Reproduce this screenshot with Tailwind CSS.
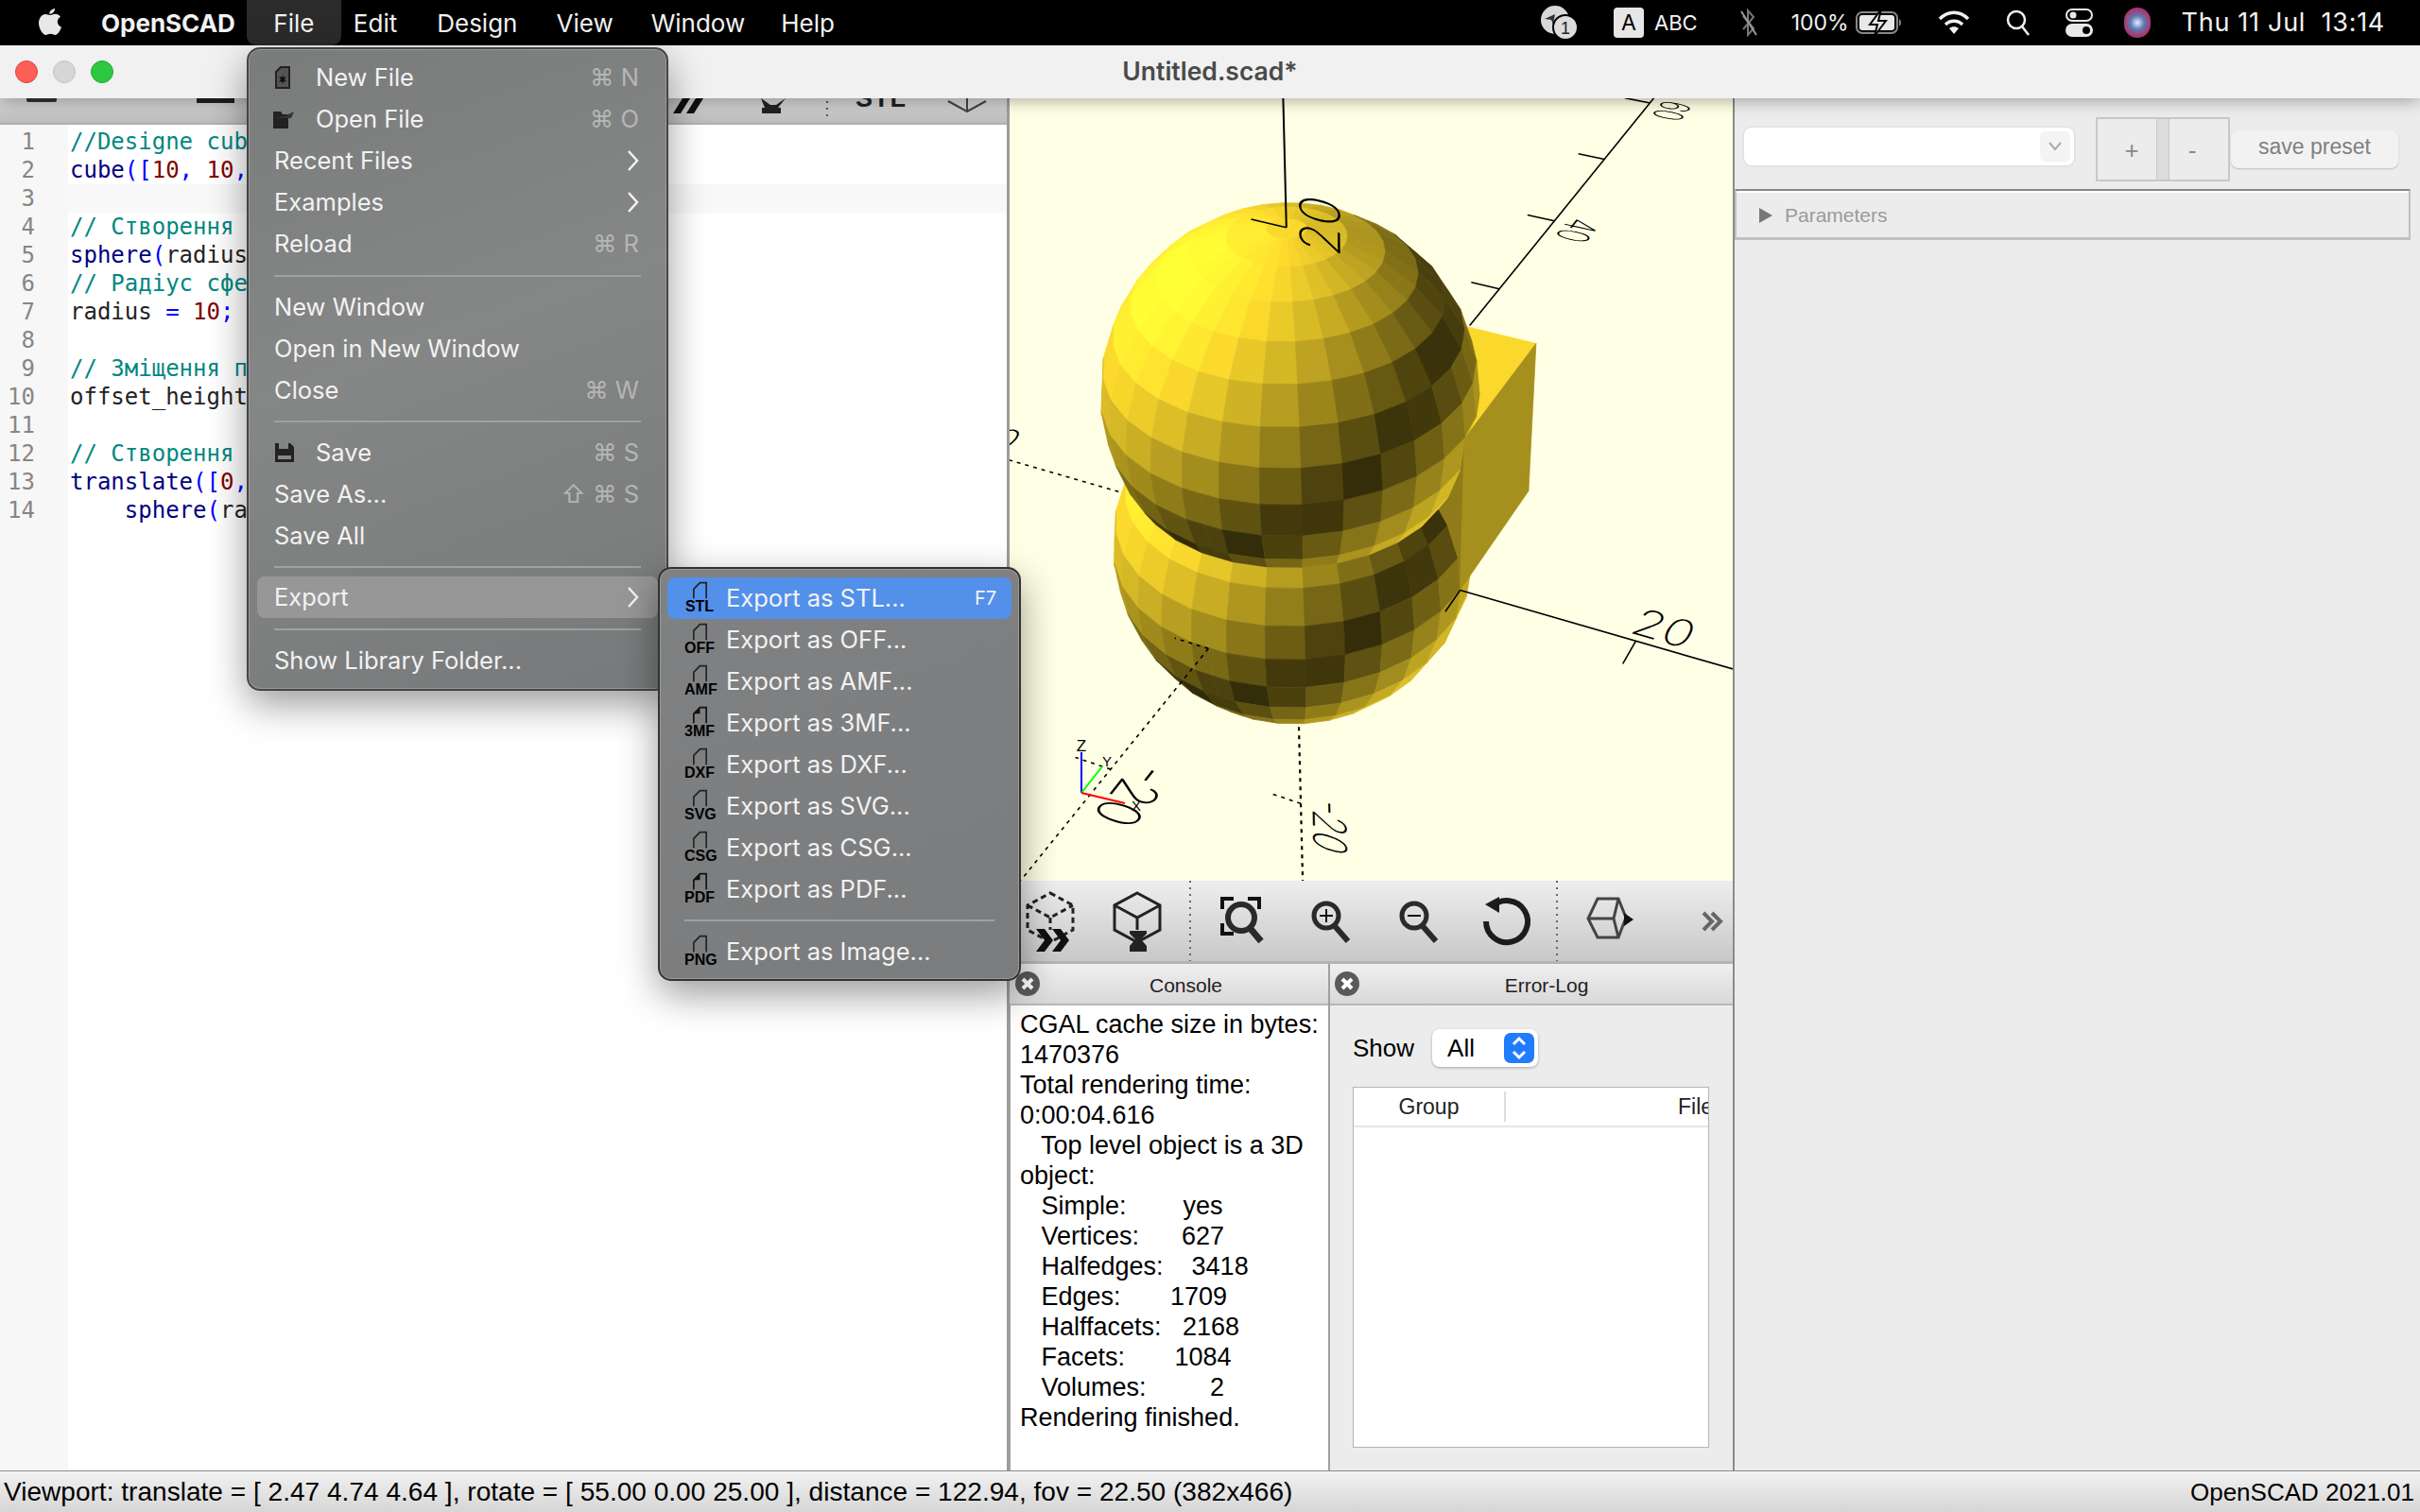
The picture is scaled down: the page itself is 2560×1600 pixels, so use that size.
<!DOCTYPE html>
<html lang="en">
<head>
    <meta charset="UTF-8">
    <title>OpenSCAD</title>
    <script src="https://cdn.jsdelivr.net/npm/@tailwindcss/browser@4"></script>
</head>
<body class="bg-[#ececec] overflow-hidden">
<div class="relative w-[2560px] h-[1600px] flex flex-col overflow-hidden font-['Liberation_Sans',sans-serif] text-black">

    <!-- mac menu bar -->
    <div class="h-[48px] bg-black text-[#f2f2f2] flex items-center text-[26px] font-['Inter',sans-serif] relative z-30 shrink-0">
        <svg class="ml-[40px] w-[26px] h-[32px]" viewBox="0 0 26 32"><path fill="#e8e8e8" d="M18 1c.3 3-2.600 6-5.600 5.800C12 4 15 1.300 18 1zM13 8c1.500 0 3-1.300 5.500-1.300 2 0 4.200 1 5.500 3-4.700 2.700-4 9 1 11-1.200 3.400-4 8.300-6.700 8.300-1.800 0-2.700-1.200-4.800-1.200s-3.200 1.200-4.800 1.200C5 29 1 22 1 16.500 1 11 4.500 7 8 7c2 0 3.600 1 5 1z"/></svg>
        <span class="ml-[41px] font-bold">OpenSCAD</span>
        <span class="ml-[12px] w-[100px] h-[48px] bg-[#2b2b2b] rounded-b-[10px] flex items-center justify-center">File</span>
        <span class="ml-[13px]">Edit</span>
        <span class="ml-[42px]">Design</span>
        <span class="ml-[41px]">View</span>
        <span class="ml-[40px]">Window</span>
        <span class="ml-[38px]">Help</span>
        <div class="ml-auto flex items-center h-[48px]">
            <svg class="w-[40px] h-[36px]" viewBox="0 0 40 36"><circle cx="16" cy="15" r="15" fill="#d8d8d8"/><path d="M5 14l11-5-2 11-2-5z" fill="#333"/><circle cx="27" cy="23" r="13" fill="#dcdcdc" stroke="#000" stroke-width="2"/><text x="27" y="30" text-anchor="middle" font-size="18" font-family="Liberation Sans" fill="#222">1</text></svg>
            <span class="ml-[38px] w-[32px] h-[32px] rounded-[4px] bg-[#e6e6e6] text-black text-[23px] flex items-center justify-center">A</span>
            <span class="ml-[11px] text-[22px]">ABC</span>
            <svg class="ml-[44px] w-[20px] h-[30px]" viewBox="0 0 20 30"><path d="M4 8l11 13-6 7V2l6 7L4 22" fill="none" stroke="#777" stroke-width="2"/><path d="M2 3l16 25" stroke="#999" stroke-width="2"/></svg>
            <span class="ml-[35px] text-[23px]">100%</span>
            <svg class="ml-[7px] w-[50px] h-[30px]" viewBox="0 0 50 30"><rect x="1" y="4" width="43" height="22" rx="6" fill="none" stroke="#888" stroke-width="2"/><rect x="4" y="7" width="37" height="16" rx="3" fill="#e8e8e8"/><path d="M46 11v8a4 4 0 0 0 2-4 4 4 0 0 0-2-4z" fill="#888"/><path d="M27 1L15 17h8l-3 12 12-16h-8z" fill="#e8e8e8" stroke="#000" stroke-width="2"/></svg>
            <svg class="ml-[37px] w-[34px] h-[26px]" viewBox="0 0 34 26"><path d="M2 9c9-9 21-9 30 0M8 15c5-5 13-5 18 0" fill="none" stroke="#f0f0f0" stroke-width="3.500"/><path d="M12 19c3-2.500 7-2.500 10 0l-5 6z" fill="#f0f0f0"/></svg>
            <svg class="ml-[38px] w-[26px] h-[28px]" viewBox="0 0 26 28"><circle cx="11" cy="11" r="9" fill="none" stroke="#f0f0f0" stroke-width="2.500"/><path d="M17 18l7 9" stroke="#f0f0f0" stroke-width="2.500"/></svg>
            <svg class="ml-[37px] w-[29px] h-[30px]" viewBox="0 0 29 30"><rect x="1" y="1" width="27" height="12" rx="6" fill="none" stroke="#e8e8e8" stroke-width="2"/><circle cx="8" cy="7" r="3.500" fill="#e8e8e8"/><rect x="0" y="16" width="29" height="14" rx="7" fill="#e8e8e8"/><circle cx="22" cy="23" r="4" fill="#000"/></svg>
            <div class="ml-[33px] w-[28px] h-[32px] rounded-full bg-[radial-gradient(circle,#dff0ff_0%,#5f78b0_35%,#b0306a_70%,#2f7f8a_100%)]"></div>
            <span class="ml-[33px] mr-[37px] tracking-[0.7px] whitespace-pre text-[27px]">Thu 11 Jul  13:14</span>
        </div>
    </div>

    <!-- window title -->
    <div class="h-[56px] bg-[#f0f1f0] flex items-center relative z-20 shrink-0 shadow-[0_2px_18px_rgba(0,0,0,0.35)]">
        <div class="flex gap-[16px] pl-[16px]">
            <span class="w-[24px] h-[24px] rounded-full bg-[#fb5f57] border border-[#e0443e]"></span>
            <span class="w-[24px] h-[24px] rounded-full bg-[#d5d6d5] border border-[#c0c1c0]"></span>
            <span class="w-[24px] h-[24px] rounded-full bg-[#2ec840] border border-[#1fae2c]"></span>
        </div>
        <span class="absolute left-0 right-0 text-center text-[26.500px] font-semibold text-[#4a4a4a] font-['Inter',sans-serif]">Untitled.scad*</span>
    </div>

    <!-- main area -->
    <div class="flex-1 flex min-h-0">

        <!-- editor column -->
        <div class="w-[1068px] flex flex-col border-r-[3px] border-[#9c9c9c] shrink-0">
            <svg class="h-[28px] w-full shrink-0 bg-[linear-gradient(#d8d8d8,#bcbcbc)] border-b-[2px] border-[#b0b0b0]" viewBox="0 104 1065 26">
                <path d="M28 104h32v2a2 2 0 0 1-2 2H30a2 2 0 0 1-2-2z" fill="#333"/>
                <rect x="208" y="104" width="40" height="5" fill="#222"/>
                <path d="M712 120l10-16h8l-10 16zM726 120l10-16h8l-10 16z" fill="#111"/>
                <path d="M805 104l10 7h6l10-7-8 10h3v6h-20v-6h3z" fill="#222"/>
                <path d="M875 107v21" stroke="#555" stroke-width="2" stroke-dasharray="2 5"/>
                <text x="905" y="113" font-size="27" font-weight="700" font-family="Liberation Sans" fill="#222" letter-spacing="1">STL</text>
                <path d="M1003 107l20 11 20-11M1023 104v14" fill="none" stroke="#444" stroke-width="2"/>
            </svg>
            <div class="flex-1 flex bg-white overflow-hidden font-['DejaVu_Sans_Mono',monospace] text-[24px] leading-[30px]">
                <div class="w-[72px] shrink-0 bg-[#f7f7f7] text-[#868686] text-right pr-[35px] pt-[3px]">
                    <div>1</div><div>2</div><div>3</div><div>4</div><div>5</div><div>6</div><div>7</div><div>8</div><div>9</div><div>10</div><div>11</div><div>12</div><div>13</div><div>14</div>
                </div>
                <div class="flex-1 pt-[3px] pl-[2px] text-[#222] [&>div]:whitespace-pre">
                    <div class="text-[#00877f]">//Designe cub</div>
                    <div><span class="text-[#000080]">cube</span><span class="text-[#0000ff]">([</span><span class="text-[#800000]">10</span><span class="text-[#0000ff]">,</span> <span class="text-[#800000]">10</span><span class="text-[#0000ff]">,</span></div>
                    <div class="h-[30px] bg-[#f8f8f8] -ml-[2px]"></div>
                    <div class="text-[#00877f]">// Створення</div>
                    <div><span class="text-[#000080]">sphere</span><span class="text-[#0000ff]">(</span>radius</div>
                    <div class="text-[#00877f]">// Радіус сфе</div>
                    <div>radius <span class="text-[#0000ff]">=</span> <span class="text-[#800000]">10</span><span class="text-[#0000ff]">;</span></div>
                    <div class="h-[30px]"></div>
                    <div class="text-[#00877f]">// Зміщення п</div>
                    <div>offset_height</div>
                    <div class="h-[30px]"></div>
                    <div class="text-[#00877f]">// Створення</div>
                    <div><span class="text-[#000080]">translate</span><span class="text-[#0000ff]">([</span><span class="text-[#800000]">0</span><span class="text-[#0000ff]">,</span></div>
                    <div>    <span class="text-[#000080]">sphere</span><span class="text-[#0000ff]">(</span>ra</div>
                </div>
            </div>
        </div>

        <!-- 3d view, toolbar and docks -->
        <div class="w-[767px] flex flex-col border-r-[2px] border-[#8a8a8a] shrink-0">
            <svg id="view" class="w-[765px] h-[828px] shrink-0 bg-[#ffffe5]" viewBox="1070 104 765 828"></svg>
            <svg class="w-[765px] h-[88px] shrink-0 bg-[linear-gradient(#eeeeee,#c8c8c8)] border-b-[3px] border-[#b4b4b4]" viewBox="1070 932 765 85">
                <g fill="none" stroke="#222" stroke-width="3">
                    <path d="M1113 945l24 13v26l-24 13-24-13v-26zM1089 958l24 13 24-13M1113 971v13" stroke-dasharray="6 4"/>
                    <path d="M1205 945l24 13v26l-24 13-24-13v-26zM1181 958l24 13 24-13M1205 971v13"/>
                    <path d="M1295 962v-11h12M1322 951h12v11M1295 977v11h12M1334 978" stroke-width="4" stroke="#111"/>
                    <circle cx="1315" cy="971" r="14" stroke-width="6" stroke="#2a2a2a"/>
                    <path d="M1325 983l11 13" stroke-width="7" stroke="#2a2a2a"/>
                    <circle cx="1405" cy="969" r="13" stroke-width="5" stroke="#2a2a2a"/>
                    <path d="M1414 980l14 16" stroke-width="6" stroke="#2a2a2a"/>
                    <path d="M1398 969h14M1405 962v14" stroke-width="2" stroke="#111"/>
                    <circle cx="1498" cy="969" r="13" stroke-width="5" stroke="#2a2a2a"/>
                    <path d="M1507 980l14 16" stroke-width="6" stroke="#2a2a2a"/>
                    <path d="M1491 969h14" stroke-width="2" stroke="#111"/>
                    <path d="M1580 960a22 22 0 1 1-6 15" stroke-width="6" stroke="#1c1c1c"/>
                    <path d="M1692 951h22l8 20-8 21h-22l-10-20zM1682 972h27l5-21M1709 972l5 20" stroke="#444"/>
                </g>
                <path d="M1197 985h18v3l-6 6 6 7v6h-18v-6l6-7-6-6z" fill="#222"/>
                <path d="M1098 983h9l9 12-9 12h-9l9-12zM1115 983h9l9 12-9 12h-9l9-12z" fill="#111"/>
                <path d="M1573 957l15-8v17z" fill="#1c1c1c"/>
                <path d="M1720 966l10 7-10 7z" fill="#111"/>
                <path d="M1804 966l9 9-9 9M1813 966l9 9-9 9" fill="none" stroke="#666" stroke-width="4"/>
                <path d="M1261 932v85M1649 932v85" stroke="#666" stroke-width="2" stroke-dasharray="2 5"/>
            </svg>

            <div class="flex-1 flex min-h-0 bg-[#ececec]">
                <div class="w-[339px] flex flex-col border-r-[2px] border-[#a0a0a0] shrink-0">
                    <div class="relative h-[44px] shrink-0 bg-[linear-gradient(#f0f0f0,#d8d8d8)] border-b-[2px] border-[#b8b8b8] flex items-center justify-center text-[21px] text-[#222] pt-[3px]">
                        <svg class="absolute left-[6px] top-[8px] w-[26px] h-[26px]" viewBox="0 0 26 26"><circle cx="13" cy="13" r="13" fill="#5a5a5a"/><path d="M8 8l10 10M18 8L8 18" stroke="#fff" stroke-width="4"/></svg>
                        <span class="pl-[36px]">Console</span>
                    </div>
                    <div class="flex-1 bg-white border-l-[1px] border-[#a0a0a0] pl-[10px] pt-[4px] text-[27px] leading-[32px] [&>div]:whitespace-pre">
                        <div>CGAL cache size in bytes:</div>
                        <div>1470376</div>
                        <div>Total rendering time:</div>
                        <div>0:00:04.616</div>
                        <div>   Top level object is a 3D</div>
                        <div>object:</div>
                        <div>   Simple:        yes</div>
                        <div>   Vertices:      627</div>
                        <div>   Halfedges:    3418</div>
                        <div>   Edges:       1709</div>
                        <div>   Halffacets:   2168</div>
                        <div>   Facets:       1084</div>
                        <div>   Volumes:         2</div>
                        <div>Rendering finished.</div>
                    </div>
                </div>
                <div class="flex-1 min-w-0 flex flex-col">
                    <div class="relative h-[44px] shrink-0 bg-[linear-gradient(#f0f0f0,#d8d8d8)] border-b-[2px] border-[#b8b8b8] flex items-center justify-center text-[21px] text-[#222] pt-[3px]">
                        <svg class="absolute left-[5px] top-[8px] w-[26px] h-[26px]" viewBox="0 0 26 26"><circle cx="13" cy="13" r="13" fill="#5a5a5a"/><path d="M8 8l10 10M18 8L8 18" stroke="#fff" stroke-width="4"/></svg>
                        <span class="pl-[32px]">Error-Log</span>
                    </div>
                    <div class="flex-1 min-w-0 pl-[24px] pr-[25px] pb-[24px] flex flex-col">
                        <div class="h-[86px] shrink-0 flex items-center text-[26px] pt-[4px]">
                            <span>Show</span>
                            <div class="ml-[19px] w-[112px] h-[40px] bg-white rounded-[8px] shadow-[0_1px_3px_rgba(0,0,0,0.3)] flex items-center pl-[16px] pr-[4px] justify-between">
                                <span>All</span>
                                <svg class="w-[32px] h-[32px]" viewBox="0 0 32 32"><rect width="32" height="32" rx="7" fill="#1f7cff"/><path d="M10 12l6-6 6 6M10 20l6 6 6-6" fill="none" stroke="#fff" stroke-width="3"/></svg>
                            </div>
                        </div>
                        <div class="flex-1 min-w-0 bg-white border-[1px] border-[#b4b4b4] flex flex-col overflow-hidden">
                            <div class="h-[42px] shrink-0 border-b-[2px] border-[#e6e6e6] flex items-center text-[23px] text-[#222] whitespace-nowrap">
                                <span class="w-[161px] h-[32px] shrink-0 border-r-[2px] border-[#dddddd] flex items-center justify-center">Group</span>
                                <span class="ml-[182px]">File</span>
                            </div>
                        </div>
                    </div>
                </div>
            </div>
        </div>

        <!-- customizer -->
        <div class="flex-1 min-w-0 bg-[#ececec] pr-[10px]">
            <div class="h-[96px] flex items-start">
                <div class="ml-[10px] mt-[31px] w-[349px] h-[40px] bg-white rounded-[8px] shadow-[0_0_3px_rgba(0,0,0,0.15)] flex justify-end items-center pr-[4px]">
                    <span class="w-[32px] h-[32px] bg-[#f4f4f4] rounded-[6px] flex items-center justify-center">
                        <svg class="w-[14px] h-[10px]" viewBox="0 0 14 10"><path d="M1 1l6 7 6-7" fill="none" stroke="#aaa" stroke-width="2"/></svg>
                    </span>
                </div>
                <div class="ml-[23px] mt-[20px] w-[142px] h-[68px] border-[2px] border-[#c8c8c8] flex text-[26px] text-[#888]">
                    <span class="w-[62px] flex items-center justify-center pt-[3px] pl-[10px]">+</span>
                    <span class="w-[14px] bg-[#dcdcdc] border-x-[1px] border-[#c8c8c8]"></span>
                    <span class="flex-1 flex items-center justify-center pt-[3px] pr-[14px]">-</span>
                </div>
                <div class="ml-[1px] mt-[34px] w-[177px] h-[40px] bg-[#f2f2f2] rounded-[8px] shadow-[0_1px_2px_rgba(0,0,0,0.2)] flex items-center justify-center text-[23px] text-[#808080] pb-[6px]">save preset</div>
            </div>
            <div class="h-[54px] border-t-[2px] border-x-[2px] border-t-[#888] border-x-[#c0c0c0] border-b-[3px] border-b-[#c0c0c0] shadow-[inset_0_2px_0_#fff] flex items-center pl-[23px] text-[21px] text-[#9a9a9a] pt-[3px]">
                <svg class="w-[16px] h-[18px] mr-[12px]" viewBox="0 0 16 18"><path d="M1 1l14 8-14 8z" fill="#777"/></svg>
                Parameters
            </div>
        </div>
    </div>

    <!-- status bar -->
    <div class="h-[44px] shrink-0 border-t-[1px] border-[#8a8a8a] bg-[linear-gradient(#f2f2f2,#d6d6d6)] flex items-center justify-between pl-[4px] pr-[6px] pt-[1px] whitespace-pre">
        <span class="text-[28px] tracking-[0.03px]">Viewport: translate = [ 2.47 4.74 4.64 ], rotate = [ 55.00 0.00 25.00 ], distance = 122.94, fov = 22.50 (382x466)</span>
        <span class="text-[26px]">OpenSCAD 2021.01</span>
    </div>

    <!-- file menu -->
    <div class="absolute z-40 left-[261px] top-[50px] w-[446px] h-[681px] pt-[8px] rounded-[14px] border-[2px] border-[#444444] bg-[linear-gradient(160deg,#7a7b7b,#858686_45%,#77797a)] shadow-[0_14px_40px_rgba(0,0,0,0.4),inset_0_0_0_1px_#9a9a9a] text-[#f2f2f2] text-[25.500px] font-['Inter','DejaVu_Sans',sans-serif]">
        <div class="h-[44px] mx-[9px] px-[18px] flex items-center"><svg class="w-[18px] h-[24px] mr-[26px]" viewBox="0 0 18 24"><path d="M2 6l5-5h9v22H2z" fill="#555" stroke="#222" stroke-width="2"/><path d="M9 9l1 3 3-1-2 3 2 3-3-1-1 3-1-3-3 1 2-3-2-3 3 1z" fill="#111"/></svg>New File<span class="ml-auto pr-[2px] text-[#b4b6b6]">⌘ N</span></div>
        <div class="h-[44px] mx-[9px] px-[18px] flex items-center"><svg class="w-[24px] h-[24px] -ml-[2px] mr-[22px]" viewBox="0 0 24 24"><path d="M1 4h8l2 3h6v15H1z" fill="#222"/><path d="M13 9l10-5-3 7H1" fill="#333"/></svg>Open File<span class="ml-auto pr-[2px] text-[#b4b6b6]">⌘ O</span></div>
        <div class="h-[44px] mx-[9px] px-[18px] flex items-center">Recent Files<svg class="ml-auto mr-[2px] w-[12px] h-[22px]" viewBox="0 0 12 22"><path d="M1 1l9 10-9 10" fill="none" stroke="#f2f2f2" stroke-width="2.500"/></svg></div>
        <div class="h-[44px] mx-[9px] px-[18px] flex items-center">Examples<svg class="ml-auto mr-[2px] w-[12px] h-[22px]" viewBox="0 0 12 22"><path d="M1 1l9 10-9 10" fill="none" stroke="#f2f2f2" stroke-width="2.500"/></svg></div>
        <div class="h-[44px] mx-[9px] px-[18px] flex items-center">Reload<span class="ml-auto pr-[2px] text-[#b4b6b6]">⌘ R</span></div>
        <div class="h-[23px] mx-[27px] flex items-center"><div class="h-[2px] w-full bg-[#9fa0a0]"></div></div>
        <div class="h-[44px] mx-[9px] px-[18px] flex items-center">New Window</div>
        <div class="h-[44px] mx-[9px] px-[18px] flex items-center">Open in New Window</div>
        <div class="h-[44px] mx-[9px] px-[18px] flex items-center">Close<span class="ml-auto pr-[2px] text-[#b4b6b6]">⌘ W</span></div>
        <div class="h-[22px] mx-[27px] flex items-center"><div class="h-[2px] w-full bg-[#9fa0a0]"></div></div>
        <div class="h-[44px] mx-[9px] px-[18px] flex items-center"><svg class="w-[22px] h-[22px] mr-[22px]" viewBox="0 0 22 22"><path d="M1 1h4v6h10V1h2l4 4v16H1z" fill="#222"/><rect x="4" y="14" width="14" height="4" fill="#888"/></svg>Save<span class="ml-auto pr-[2px] text-[#b4b6b6]">⌘ S</span></div>
        <div class="h-[44px] mx-[9px] px-[18px] flex items-center">Save As...<span class="ml-auto pr-[2px] text-[#b4b6b6]">⇧ ⌘ S</span></div>
        <div class="h-[44px] mx-[9px] px-[18px] flex items-center">Save All</div>
        <div class="h-[21px] mx-[27px] flex items-center"><div class="h-[2px] w-full bg-[#9fa0a0]"></div></div>
        <div class="h-[44px] mx-[9px] px-[18px] flex items-center rounded-[8px] bg-[#979797]">Export<svg class="ml-auto mr-[2px] w-[12px] h-[22px]" viewBox="0 0 12 22"><path d="M1 1l9 10-9 10" fill="none" stroke="#f2f2f2" stroke-width="2.500"/></svg></div>
        <div class="h-[23px] mx-[27px] flex items-center"><div class="h-[2px] w-full bg-[#9fa0a0]"></div></div>
        <div class="h-[44px] mx-[9px] px-[18px] flex items-center">Show Library Folder...</div>
    </div>

    <!-- export submenu -->
    <div class="absolute z-40 left-[696px] top-[600px] w-[384px] h-[438px] pt-[9px] rounded-[14px] border-[2px] border-[#333333] bg-[linear-gradient(160deg,#808182,#7b7c7d)] shadow-[0_14px_40px_rgba(0,0,0,0.4),inset_0_0_0_1px_#9a9a9a] text-[#f2f2f2] text-[25.500px] font-['Inter',sans-serif]">
        <div class="h-[44px] mx-[8px] pl-[18px] pr-[16px] flex items-center rounded-[8px] bg-[#5290ea]">
            <span class="relative w-[44px] h-[44px]"><svg class="absolute left-[9px] top-[4px] w-[15px] h-[20px]" viewBox="0 0 18 22"><path d="M1 21V9l8-8h8v20" fill="none" stroke="#222" stroke-width="2"/></svg><span class="absolute left-0 top-[23px] w-[32px] text-center text-[16px] leading-[16px] font-bold text-black font-['Liberation_Sans',sans-serif]">STL</span></span>Export as STL...<span class="ml-auto text-[20px]">F7</span>
        </div>
        <div class="h-[44px] mx-[8px] pl-[18px] flex items-center">
            <span class="relative w-[44px] h-[44px]"><svg class="absolute left-[9px] top-[4px] w-[15px] h-[20px]" viewBox="0 0 18 22"><path d="M1 21V9l8-8h8v20" fill="none" stroke="#222" stroke-width="2"/></svg><span class="absolute left-0 top-[23px] w-[32px] text-center text-[16px] leading-[16px] font-bold text-black font-['Liberation_Sans',sans-serif]">OFF</span></span>Export as OFF...
        </div>
        <div class="h-[44px] mx-[8px] pl-[18px] flex items-center">
            <span class="relative w-[44px] h-[44px]"><svg class="absolute left-[9px] top-[4px] w-[15px] h-[20px]" viewBox="0 0 18 22"><path d="M1 21V9l8-8h8v20" fill="none" stroke="#222" stroke-width="2"/></svg><span class="absolute left-0 top-[23px] w-[32px] text-center text-[16px] leading-[16px] font-bold text-black font-['Liberation_Sans',sans-serif]">AMF</span></span>Export as AMF...
        </div>
        <div class="h-[44px] mx-[8px] pl-[18px] flex items-center">
            <span class="relative w-[44px] h-[44px]"><svg class="absolute left-[9px] top-[4px] w-[15px] h-[20px]" viewBox="0 0 18 22"><path d="M1 21V9l8-8h8v20" fill="none" stroke="#111" stroke-width="2"/><path d="M1 9l8-8v8z" fill="#111"/></svg><span class="absolute left-0 top-[23px] w-[32px] text-center text-[16px] leading-[16px] font-bold text-black font-['Liberation_Sans',sans-serif]">3MF</span></span>Export as 3MF...
        </div>
        <div class="h-[44px] mx-[8px] pl-[18px] flex items-center">
            <span class="relative w-[44px] h-[44px]"><svg class="absolute left-[9px] top-[4px] w-[15px] h-[20px]" viewBox="0 0 18 22"><path d="M1 21V9l8-8h8v20" fill="none" stroke="#222" stroke-width="2"/></svg><span class="absolute left-0 top-[23px] w-[32px] text-center text-[16px] leading-[16px] font-bold text-black font-['Liberation_Sans',sans-serif]">DXF</span></span>Export as DXF...
        </div>
        <div class="h-[44px] mx-[8px] pl-[18px] flex items-center">
            <span class="relative w-[44px] h-[44px]"><svg class="absolute left-[9px] top-[4px] w-[15px] h-[20px]" viewBox="0 0 18 22"><path d="M1 21V9l8-8h8v20" fill="none" stroke="#222" stroke-width="2"/></svg><span class="absolute left-0 top-[23px] w-[32px] text-center text-[16px] leading-[16px] font-bold text-black font-['Liberation_Sans',sans-serif]">SVG</span></span>Export as SVG...
        </div>
        <div class="h-[44px] mx-[8px] pl-[18px] flex items-center">
            <span class="relative w-[44px] h-[44px]"><svg class="absolute left-[9px] top-[4px] w-[15px] h-[20px]" viewBox="0 0 18 22"><path d="M1 21V9l8-8h8v20" fill="none" stroke="#222" stroke-width="2"/></svg><span class="absolute left-0 top-[23px] w-[32px] text-center text-[16px] leading-[16px] font-bold text-black font-['Liberation_Sans',sans-serif]">CSG</span></span>Export as CSG...
        </div>
        <div class="h-[44px] mx-[8px] pl-[18px] flex items-center">
            <span class="relative w-[44px] h-[44px]"><svg class="absolute left-[9px] top-[4px] w-[15px] h-[20px]" viewBox="0 0 18 22"><path d="M1 21V9l8-8h8v20" fill="none" stroke="#111" stroke-width="2"/><path d="M1 9l8-8v8z" fill="#111"/></svg><span class="absolute left-0 top-[23px] w-[32px] text-center text-[16px] leading-[16px] font-bold text-black font-['Liberation_Sans',sans-serif]">PDF</span></span>Export as PDF...
        </div>
        <div class="h-[22px] mx-[26px] flex items-center"><div class="h-[2px] w-full bg-[#9fa0a0]"></div></div>
        <div class="h-[44px] mx-[8px] pl-[18px] flex items-center">
            <span class="relative w-[44px] h-[44px]"><svg class="absolute left-[9px] top-[4px] w-[15px] h-[20px]" viewBox="0 0 18 22"><path d="M1 21V9l8-8h8v20" fill="none" stroke="#222" stroke-width="2"/></svg><span class="absolute left-0 top-[23px] w-[32px] text-center text-[16px] leading-[16px] font-bold text-black font-['Liberation_Sans',sans-serif]">PNG</span></span>Export as Image...
        </div>
    </div>
</div>

<script>
    // camera from the status bar text: rotate 55/0/25, distance 122.94, fov 22.5, 382x466 @2x
    const rad = Math.PI / 180;
    const T = [2.47, 4.74, 4.64], DIST = 122.94, CX = 1452, CY = 466;
    const F = 466 / Math.tan(11.25 * rad);
    const cz = Math.cos(25 * rad), sz = Math.sin(25 * rad), cx = Math.cos(55 * rad), sx = Math.sin(55 * rad);

    const rot = ([x, y, z]) => {
        const a = x * cz + y * sz, b = -x * sz + y * cz;
        return [a, b * cx + z * sx, -b * sx + z * cx];
    };
    const project = (p) => {
        const v = rot([p[0] - T[0], p[1] - T[1], p[2] - T[2]]);
        const d = DIST - v[2];
        return [CX + F * v[0] / d, CY - F * v[1] / d];
    };
    // camera position in world space
    const CAM = [0, 1, 2].map(i => T[i] + DIST * [sz * sx, -cz * sx, cx][i]);
    const LIGHT = [-1, 1, 1].map(v => v / Math.sqrt(3));

    const normal = (poly) => {
        let n = [0, 0, 0];
        poly.forEach((a, i) => {
            const b = poly[(i + 1) % poly.length];
            n[0] += (a[1] - b[1]) * (a[2] + b[2]);
            n[1] += (a[2] - b[2]) * (a[0] + b[0]);
            n[2] += (a[0] - b[0]) * (a[1] + b[1]);
        });
        const l = Math.hypot(...n) || 1;
        return n.map(v => v / l);
    };
    const shade = (n) => {
        const v = rot(n);
        const i = 0.2 + Math.abs(v[0] * LIGHT[0] + v[1] * LIGHT[1] + v[2] * LIGHT[2]);
        const c = [249, 215, 44].map(k => Math.min(255, Math.round(k * i)));
        return `rgb(${c})`;
    };

    // same mesh openscad builds for r=10: 30 fragments, 15 rings
    const sphere = (z0) => {
        const rings = [];
        for (let i = 0; i < 15; i++) {
            const phi = 180 * (i + 0.5) / 15 * rad, ring = [];
            for (let j = 0; j < 30; j++) {
                const t = 12 * j * rad;
                ring.push([10 * Math.sin(phi) * Math.cos(t), 10 * Math.sin(phi) * Math.sin(t), 10 * Math.cos(phi) + z0]);
            }
            rings.push(ring);
        }
        const out = [rings[0].slice(), rings[14].slice().reverse()];
        for (let i = 0; i < 14; i++)
            for (let j = 0; j < 30; j++)
                out.push([rings[i][j], rings[i + 1][j], rings[i + 1][(j + 1) % 30], rings[i][(j + 1) % 30]]);
        return out.map(poly => {
            const n = normal(poly);
            const c = poly.reduce((s, p) => [s[0] + p[0], s[1] + p[1], s[2] + p[2]], [0, 0, 0]).map(v => v / poly.length);
            const out = n[0] * c[0] + n[1] * c[1] + n[2] * (c[2] - z0) > 0;
            return out ? { poly, n } : { poly: poly.slice().reverse(), n: n.map(v => -v) };
        }).filter(f => {
            const c = f.poly[0];
            return f.n[0] * (CAM[0] - c[0]) + f.n[1] * (CAM[1] - c[1]) + f.n[2] * (CAM[2] - c[2]) > 0;
        });
    };

    const clip = (poly, axis, lo, hi) => {
        const cut = (pts, inside, val) => {
            const res = [];
            pts.forEach((a, i) => {
                const b = pts[(i + 1) % pts.length];
                const ia = inside(a[axis]), ib = inside(b[axis]);
                if (ia) res.push(a);
                if (ia !== ib) {
                    const t = (val - a[axis]) / (b[axis] - a[axis]);
                    res.push([a[0] + t * (b[0] - a[0]), a[1] + t * (b[1] - a[1]), a[2] + t * (b[2] - a[2])]);
                }
            });
            return res;
        };
        let r = cut(poly, v => v >= lo, lo);
        if (r.length) r = cut(r, v => v <= hi, hi);
        return r;
    };

    const svg = [];
    const draw = (poly, n) => {
        if (poly.length < 3) return;
        const col = shade(n);
        const pts = poly.map(p => project(p).map(v => v.toFixed(1)).join(',')).join(' ');
        svg.push(`<polygon points="${pts}" fill="${col}" stroke="${col}" stroke-width="0.7"/>`);
    };

    const HEIGHT = 10;
    const lower = sphere(0), upper = sphere(HEIGHT);
    const zSlabs = [[-99, 0], [0, HEIGHT / 2], [HEIGHT / 2, 10], [10, 99]];
    const ySlabs = [[0, 99], [-99, 0]], xSlabs = [[-99, 0], [0, 99]];

    // back to front through the grid of cube/sphere planes
    zSlabs.forEach(([zl, zh], zi) => {
        const faces = zh <= HEIGHT / 2 ? lower : upper;
        ySlabs.forEach(([yl, yh], yi) => {
            if (yi === 1 && zl >= 0 && zh <= 10)
                draw([[0, 0, zl], [10, 0, zl], [10, 0, zh], [0, 0, zh]], [0, -1, 0]);
            xSlabs.forEach(([xl, xh], xi) => {
                if (xi === 1 && yi === 0 && zl >= 0 && zh <= 10) return;
                faces.forEach(f => {
                    let p = clip(f.poly, 2, zl, zh);
                    if (p.length) p = clip(p, 1, yl, yh);
                    if (p.length) p = clip(p, 0, xl, xh);
                    draw(p, f.n);
                });
            });
        });
        if (zi === 2) draw([[0, 0, 10], [10, 0, 10], [10, 10, 10], [0, 10, 10]], [0, 0, 1]);
    });
    draw([[10, 0, 0], [10, 10, 0], [10, 10, 10], [10, 0, 10]], [1, 0, 0]);

    // ray from a point to the camera, blocked by the model?
    const blocked = (p) => {
        const d = [CAM[0] - p[0], CAM[1] - p[1], CAM[2] - p[2]];
        for (const z0 of [0, HEIGHT]) {
            const o = [p[0], p[1], p[2] - z0];
            const a = d[0] * d[0] + d[1] * d[1] + d[2] * d[2];
            const b = 2 * (o[0] * d[0] + o[1] * d[1] + o[2] * d[2]);
            const c = o[0] * o[0] + o[1] * o[1] + o[2] * o[2] - 100;
            const q = b * b - 4 * a * c;
            if (q > 0 && (-b + Math.sqrt(q)) / (2 * a) > 0.001) return true;
        }
        let t0 = 0.001, t1 = 1;
        for (let i = 0; i < 3; i++) {
            const hi = 10;
            if (Math.abs(d[i]) < 1e-9) { if (p[i] < 0 || p[i] > hi) return false; continue; }
            let a = (0 - p[i]) / d[i], b = (hi - p[i]) / d[i];
            if (a > b) [a, b] = [b, a];
            t0 = Math.max(t0, a); t1 = Math.min(t1, b);
        }
        return t0 <= t1;
    };

    const line3 = (a, b, dashed, width) => {
        const steps = Math.max(4, Math.round(Math.hypot(b[0] - a[0], b[1] - a[1], b[2] - a[2]) * 4));
        let run = null;
        const flush = (end) => {
            if (!run) return;
            const s = project(run), e = project(end);
            svg.push(`<line x1="${s[0].toFixed(1)}" y1="${s[1].toFixed(1)}" x2="${e[0].toFixed(1)}" y2="${e[1].toFixed(1)}" stroke="#000" stroke-width="${width}"${dashed ? ' stroke-dasharray="4 5"' : ''}/>`);
            run = null;
        };
        let last = a;
        for (let i = 0; i <= steps; i++) {
            const t = i / steps, p = [a[0] + t * (b[0] - a[0]), a[1] + t * (b[1] - a[1]), a[2] + t * (b[2] - a[2])];
            if (blocked(p)) flush(last);
            else if (!run) run = p;
            last = p;
        }
        flush(last);
    };

    line3([0, 0, 0], [70, 0, 0], false, 1.6);
    line3([0, 0, 0], [-70, 0, 0], true, 1.6);
    line3([0, 0, 0], [0, 70, 0], false, 1.6);
    line3([0, 0, 0], [0, -60, 0], true, 1.6);
    line3([0, 0, 0], [0, 0, 70], false, 2);
    line3([0, 0, 0], [0, 0, -50], true, 2.2);
    for (let v = 10; v <= 60; v += 10) {
        line3([v, 0, 0], [v, -2, 0], false, 1.6);
        line3([-v, 0, 0], [-v, -2, 0], true, 1.6);
        line3([0, v, 0], [-2, v, 0], false, 1.6);
        line3([0, -v, 0], [-2, -v, 0], true, 1.6);
        line3([0, 0, v], [-2, 0, v], false, 1.6);
        line3([0, 0, -v], [-2, 0, -v], true, 1.6);
    }

    // scale labels lie in the planes of the axes, digits a bit narrower than tall
    const label = (txt, p, u, v) => {
        const s = 3.1 / 20, su = s * 0.85, o = project(p);
        const pu = project([p[0] + u[0], p[1] + u[1], p[2] + u[2]]);
        const pv = project([p[0] + v[0], p[1] + v[1], p[2] + v[2]]);
        const m = [(pu[0] - o[0]) * su, (pu[1] - o[1]) * su, -(pv[0] - o[0]) * s, -(pv[1] - o[1]) * s, o[0], o[1]];
        svg.push(`<text transform="matrix(${m.map(n => n.toFixed(3)).join(' ')})" font-size="20" font-family="Inter" font-weight="200" fill="#000">${txt}</text>`);
    };
    label('20', [19.4, 0.5, 0], [1, 0, 0], [0, 1, 0]);
    label('-20', [-23.5, 0.5, 0], [1, 0, 0], [0, 1, 0]);
    label('40', [0.8, 41, 0], [0, -1, 0], [1, 0, 0]);
    label('60', [0.8, 61, 0], [0, -1, 0], [1, 0, 0]);
    label('-20', [0.8, -19, 0], [0, -1, 0], [1, 0, 0]);
    label('20', [3, 0, 19], [0, 0, 1], [-1, 0, 0]);
    label('-20', [0.8, 0, -19], [0, 0, -1], [1, 0, 0]);

    // small axes gizmo bottom left
    svg.push('<path d="M1146 839V796" stroke="#00f" stroke-width="2"/><path d="M1146 839L1168 811" stroke="#0f0" stroke-width="2"/><path d="M1146 839L1192 850" stroke="#f00" stroke-width="2"/>');
    svg.push('<text x="1146" y="795" text-anchor="middle" font-size="17" font-family="Liberation Sans" fill="#000">Z</text><text x="1173" y="811" text-anchor="middle" font-size="15" font-family="Liberation Sans" fill="#000">Y</text><text x="1204" y="858" text-anchor="middle" font-size="15" font-family="Liberation Sans" fill="#000">X</text>');

    document.getElementById('view').innerHTML = svg.join('');
</script>
</body>
</html>
